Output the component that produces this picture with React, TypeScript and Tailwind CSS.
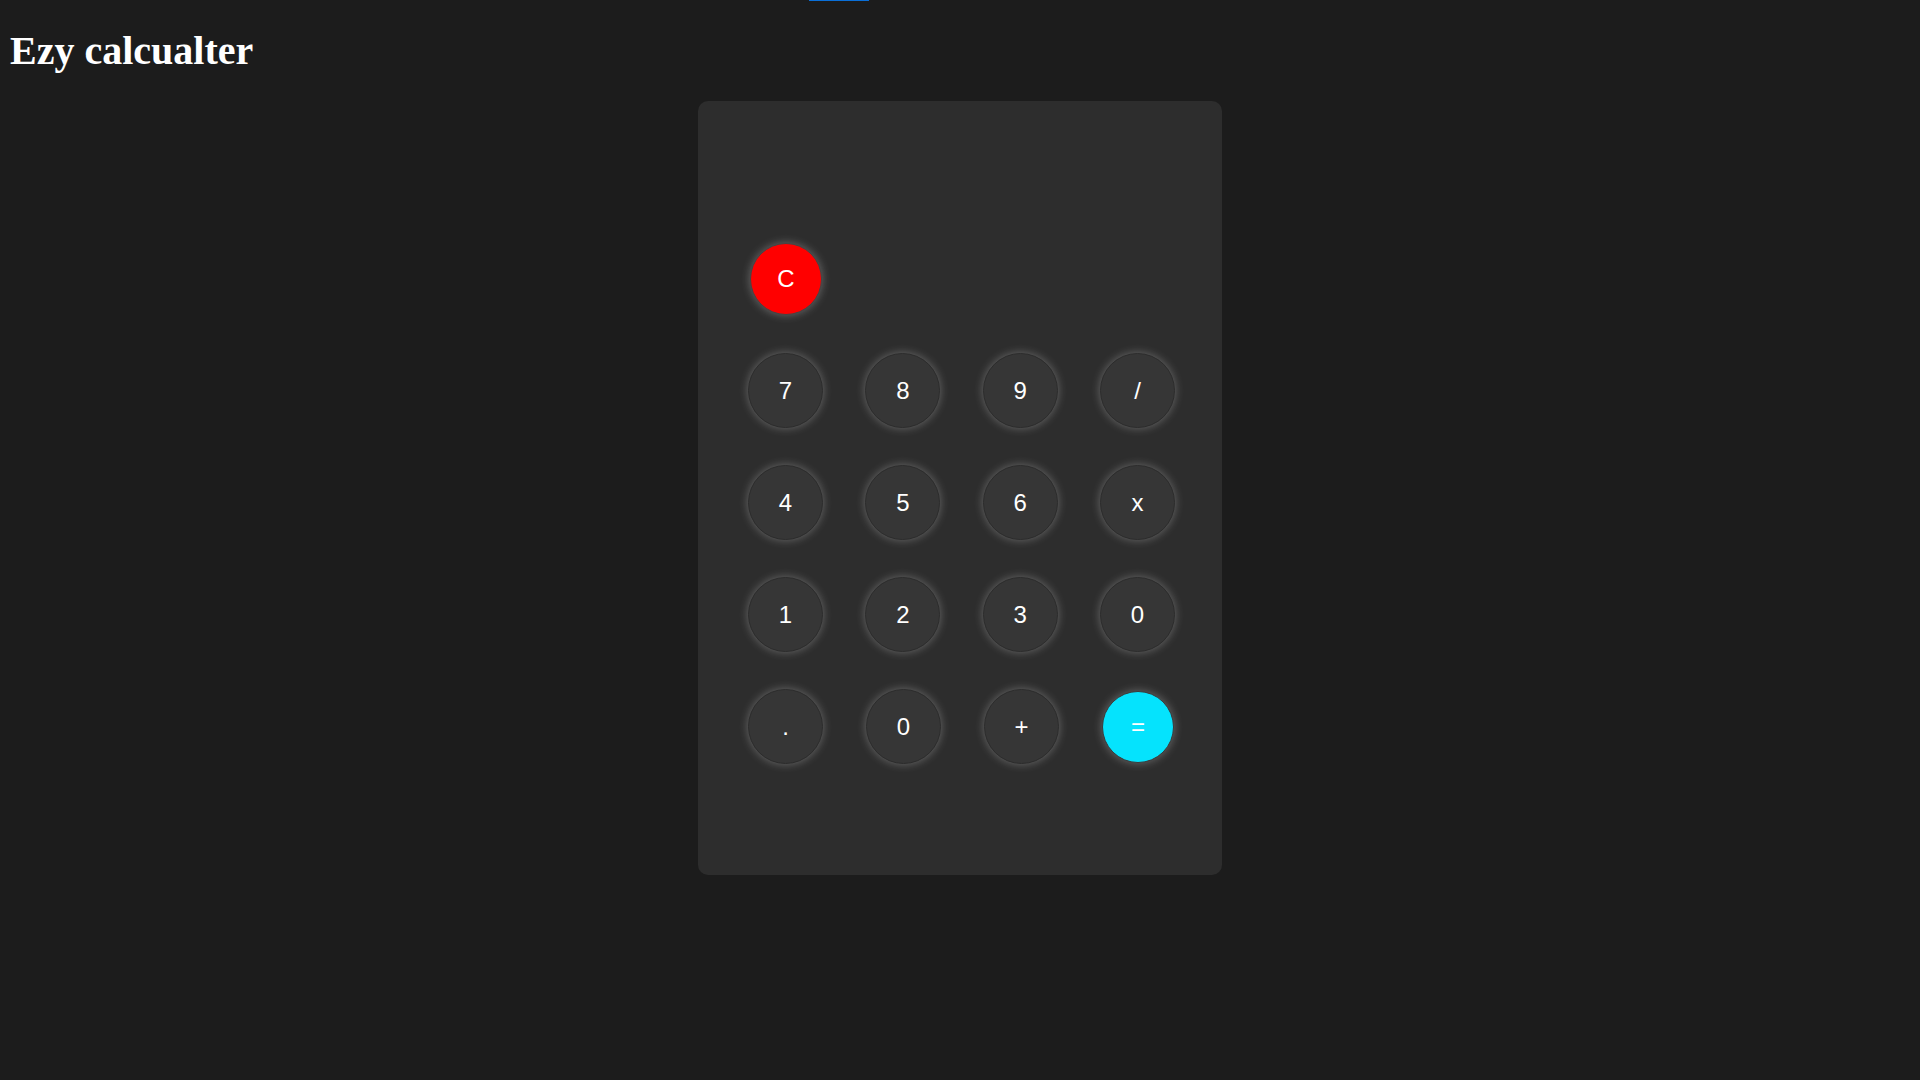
import React from "react";

const rows = [
  ["7", "8", "9", "/"],
  ["4", "5", "6", "x"],
  ["1", "2", "3", "0"],
  [".", "0", "+", "="],
];

function Key({ label, tone = "gray" }: { label: string; tone?: "gray" | "red" | "cyan" }) {
  const look =
    tone === "red"
      ? "w-[72px] h-[72px] bg-[#ff0000] border-[#444]"
      : tone === "cyan"
      ? "w-[72px] h-[72px] mr-[1px] bg-[#05e3fd] border-[#3a3a3a]"
      : "w-[75px] h-[75px] bg-[#363636] border-[#2c2c2c]";
  return (
    <button
      className={`${look} rounded-full border text-white text-[24px] font-['Liberation_Sans',Arial,sans-serif] shadow-[0_0_10px_rgba(255,255,255,0.3)] flex items-center justify-center`}
    >
      {label}
    </button>
  );
}

export default function App() {
  return (
    <div className="relative min-h-screen bg-[#1c1c1c]">
      <div className="absolute top-0 left-[809px] w-[60px] h-[1px] bg-[#0a6fd8]" />
      <h1 className="m-0 pt-[29px] pl-[10px] text-[40px] leading-[44px] font-bold text-white font-['Liberation_Serif','Times_New_Roman',serif]">
        Ezy calcualter
      </h1>

      <div className="flex justify-center mt-[28px]">
        <div className="w-[524px] h-[774px] bg-[#2d2d2d] rounded-[10px] pl-[50px] pr-[47px] pt-[48px]">
          <div className="h-[92px]" />
          <div className="flex flex-col gap-[37px]">
            <div className="flex items-center h-[75px] pl-[2px]">
              <Key label="C" tone="red" />
            </div>
            {rows.map((row, i) => (
              <div key={i} className="flex justify-between items-center h-[75px]">
                {row.map((k, j) => (
                  <Key key={j} label={k} tone={k === "=" ? "cyan" : "gray"} />
                ))}
              </div>
            ))}
          </div>
        </div>
      </div>
    </div>
  );
}
